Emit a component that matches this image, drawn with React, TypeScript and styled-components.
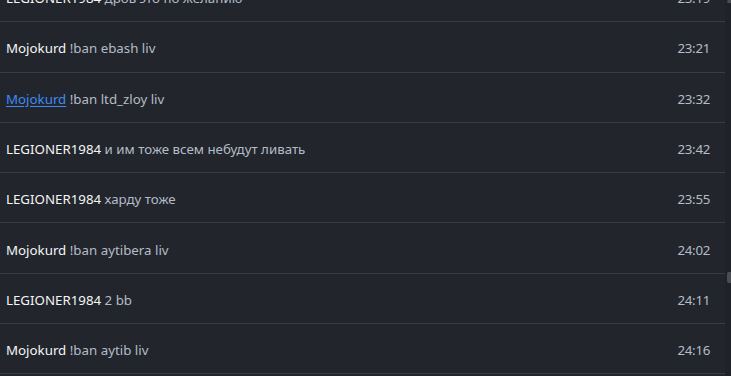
import React from 'react';
import styled, { createGlobalStyle } from 'styled-components';

// chat log, scrolled part-way down

const GlobalStyle = createGlobalStyle`
  * {
    margin: 0;
    padding: 0;
    box-sizing: border-box;
  }

  html, body {
    height: 100%;
    overflow: hidden;
  }

  body {
    background-color: #22252b;
    font-family: "Noto Sans", "Open Sans", sans-serif;
  }
`;

const Frame = styled.div`
  display: flex;
  width: 731px;
  height: 376px;
  overflow: hidden;
  background-color: #22252b;
`;

const Viewport = styled.div`
  flex: 1;
  overflow: hidden;
`;

const List = styled.ul`
  list-style: none;
  margin-top: -28px;
`;

const Row = styled.li`
  display: flex;
  align-items: center;
  justify-content: space-between;
  height: 50.3px;
  padding: 3px 15px 0 6px;
  border-bottom: 1px solid #393c43;
  font-size: 13.3px;
`;

const Message = styled.span`
  color: #b3bcc8;
  white-space: nowrap;
`;

const Author = styled.a<{ $link?: boolean }>`
  color: ${({ $link }) => ($link ? '#3d8bf2' : '#f4f5f7')};
  text-decoration: ${({ $link }) => ($link ? 'underline' : 'none')};
  text-underline-offset: 2px;
  cursor: pointer;
`;

const Time = styled.span`
  color: #b3bcc8;
  letter-spacing: -0.3px;
`;

const Track = styled.div`
  position: relative;
  width: 6px;
  height: 100%;
  background-color: #1f2227;
`;

const Thumb = styled.div`
  position: absolute;
  right: 0;
  width: 4px;
  border-radius: 2px 0 0 2px;
  background-color: #4a4d54;
`;

type Msg = { author: string; text: string; time: string; link?: boolean };

const messages: Msg[] = [
  { author: 'LEGIONER1984', text: 'дров это по желанию', time: '23:19' },
  { author: 'Mojokurd', text: '!ban ebash liv', time: '23:21' },
  { author: 'Mojokurd', text: '!ban ltd_zloy liv', time: '23:32', link: true },
  { author: 'LEGIONER1984', text: 'и им тоже всем небудут ливать', time: '23:42' },
  { author: 'LEGIONER1984', text: 'харду тоже', time: '23:55' },
  { author: 'Mojokurd', text: '!ban aytibera liv', time: '24:02' },
  { author: 'LEGIONER1984', text: '2 bb', time: '24:11' },
  { author: 'Mojokurd', text: '!ban aytib liv', time: '24:16' },
];

export default function App() {
  return (
    <>
      <GlobalStyle />
      <Frame>
        <Viewport>
          <List>
            {messages.map((m, i) => (
              <Row key={i}>
                <Message>
                  <Author $link={m.link}>{m.author}</Author> {m.text}
                </Message>
                <Time>{m.time}</Time>
              </Row>
            ))}
          </List>
        </Viewport>
        <Track>
          <Thumb style={{ top: 0, height: 3 }} />
          <Thumb style={{ top: 272, height: 11 }} />
        </Track>
      </Frame>
    </>
  );
}
